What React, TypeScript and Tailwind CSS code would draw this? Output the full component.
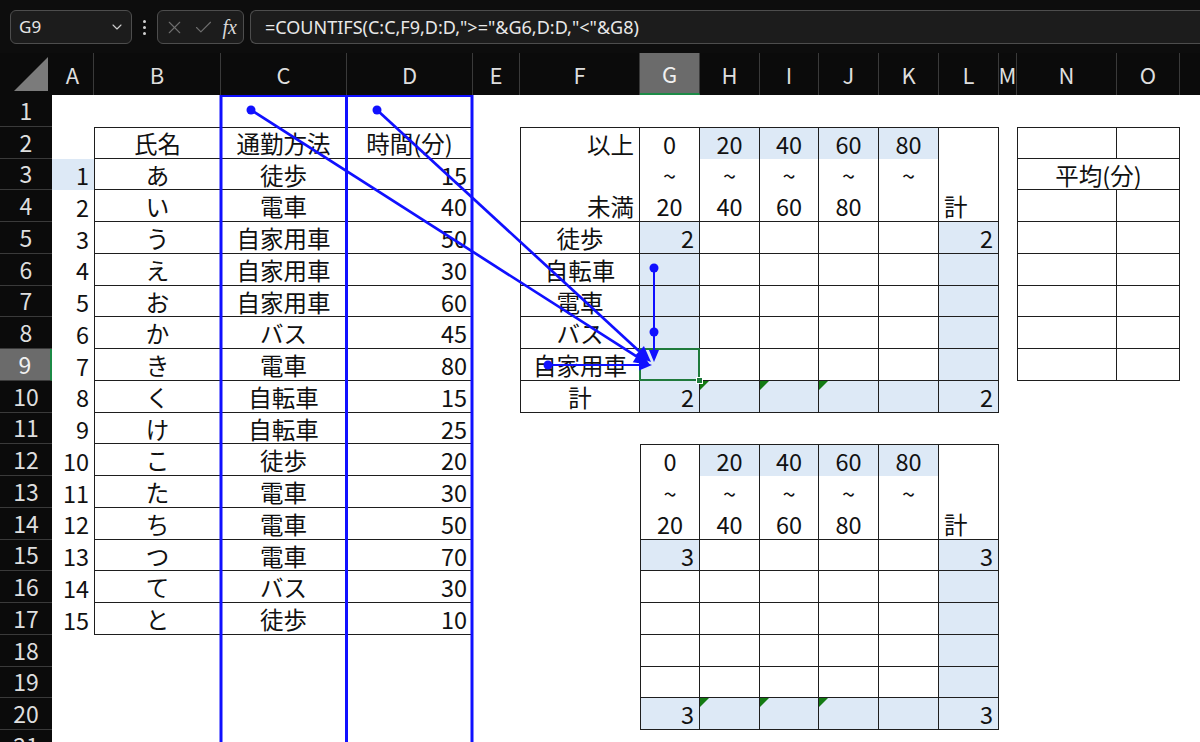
import React from "react";
import clsx from "clsx";
import { ChevronDown, X, Check } from "lucide-react";

const COLS = ["A", "B", "C", "D", "E", "F", "G", "H", "I", "J", "K", "L", "M", "N", "O", "P"];

type Align = "l" | "c" | "r";
type Cell = {
  t?: string;
  a?: Align;
  fill?: boolean;
  bt?: boolean;
  bl?: boolean;
  bb?: boolean;
  br?: boolean;
  span?: boolean;
  tri?: boolean;
  skip?: boolean;
  sel?: boolean;
};

const cells: Record<string, Cell> = {};
const set = (k: string, v: Cell) => {
  cells[k] = { ...(cells[k] || {}), ...v };
};
const range = (c1: string, c2: string) => COLS.slice(COLS.indexOf(c1), COLS.indexOf(c2) + 1);

const names = ["あ", "い", "う", "え", "お", "か", "き", "く", "け", "こ", "た", "ち", "つ", "て", "と"];
const methods = ["徒歩", "電車", "自家用車", "自家用車", "自家用車", "バス", "電車", "自転車", "自転車", "徒歩", "電車", "電車", "電車", "バス", "徒歩"];
const times = [15, 40, 50, 30, 60, 45, 80, 15, 25, 20, 30, 50, 70, 30, 10];

// left table B2:D17
for (let r = 2; r <= 17; r++)
  for (const c of ["B", "C", "D"]) set(c + r, { br: true, bb: true, bl: c === "B", bt: r === 2 });
set("B2", { t: "氏名", a: "c" });
set("C2", { t: "通勤方法", a: "c" });
set("D2", { t: "時間(分)", a: "c" });
for (let i = 0; i < 15; i++) {
  const r = i + 3;
  set("A" + r, { t: String(i + 1), a: "r" });
  set("B" + r, { t: names[i], a: "c" });
  set("C" + r, { t: methods[i], a: "c" });
  set("D" + r, { t: String(times[i]), a: "r" });
}
set("A3", { fill: true });

// middle table F2:L10
for (let r = 2; r <= 10; r++)
  for (const c of range("F", "L")) set(c + r, { br: true, bl: c === "F", bt: r === 2, bb: r >= 4 });
set("F2", { t: "以上", a: "r" });
set("F4", { t: "未満", a: "r" });
const bounds = ["0", "20", "40", "60", "80"];
const headerBlock = (top: number) => {
  range("G", "K").forEach((c, i) => {
    set(c + top, { t: bounds[i], a: "c", fill: i > 0 });
    set(c + (top + 1), { t: "~", a: "c" });
    if (i < 4) set(c + (top + 2), { t: bounds[i + 1], a: "c" });
  });
  set("L" + (top + 2), { t: "計", a: "l" });
};
headerBlock(2);
["徒歩", "自転車", "電車", "バス", "自家用車", "計"].forEach((t, i) => set("F" + (i + 5), { t, a: "c" }));
for (let r = 5; r <= 10; r++) {
  set("G" + r, { fill: true });
  set("L" + r, { fill: true });
}
range("H", "K").forEach((c) => set(c + "10", { fill: true }));
["H", "I", "J"].forEach((c) => set(c + "10", { tri: true }));
set("G5", { t: "2", a: "r" });
set("L5", { t: "2", a: "r" });
set("G10", { t: "2", a: "r" });
set("L10", { t: "2", a: "r" });
set("G9", { sel: true });

// bottom table G12:L20
for (let r = 12; r <= 20; r++)
  for (const c of range("G", "L")) set(c + r, { br: true, bl: c === "G", bt: r === 12, bb: r >= 14 });
headerBlock(12);
set("G15", { t: "3", a: "r", fill: true });
set("L15", { t: "3", a: "r", fill: true });
for (let r = 16; r <= 19; r++) set("L" + r, { fill: true });
set("G20", { t: "3", a: "r", fill: true });
range("H", "K").forEach((c) => set(c + "20", { fill: true }));
["H", "I", "J"].forEach((c) => set(c + "20", { tri: true }));
set("L20", { t: "3", a: "r", fill: true });

// right table N2:O9
for (let r = 2; r <= 9; r++)
  for (const c of ["N", "O"]) set(c + r, { br: true, bb: true, bl: c === "N", bt: r === 2 });
set("N3", { t: "平均(分)", a: "c", span: true });
set("O3", { skip: true });

type Pt = [number, number];
const head = (from: Pt, tip: Pt, len: number, w: number) => {
  const dx = tip[0] - from[0];
  const dy = tip[1] - from[1];
  const d = Math.hypot(dx, dy);
  const ux = dx / d;
  const uy = dy / d;
  const bx = tip[0] - ux * len;
  const by = tip[1] - uy * len;
  return {
    points: `${tip[0]},${tip[1]} ${bx - uy * w},${by + ux * w} ${bx + uy * w},${by - ux * w}`,
    base: [bx, by] as Pt,
  };
};

const BLUE = "#1010ff";

function Overlay() {
  const diag: { from: Pt; tip: Pt }[] = [
    { from: [251, 110], tip: [650, 365] },
    { from: [377, 110], tip: [651, 362] },
  ];
  const h1 = head([548, 365], [652, 365], 13, 5.5);
  const v1 = head([654, 268], [654, 362], 12, 5);
  return (
    <svg className="pointer-events-none absolute left-0 top-0 z-20" width={1200} height={742} viewBox="0 0 1200 742">
      <line x1={221} y1={95} x2={221} y2={742} stroke={BLUE} strokeWidth={3} />
      <line x1={346.5} y1={95} x2={346.5} y2={742} stroke={BLUE} strokeWidth={3} />
      <line x1={472} y1={95} x2={472} y2={742} stroke={BLUE} strokeWidth={3} />
      <line x1={220} y1={96} x2={473} y2={96} stroke={BLUE} strokeWidth={2} />
      {diag.map((a, i) => {
        const h = head(a.from, a.tip, 16, 7);
        return (
          <g key={i}>
            <line x1={a.from[0]} y1={a.from[1]} x2={h.base[0]} y2={h.base[1]} stroke={BLUE} strokeWidth={2.7} />
            <circle cx={a.from[0]} cy={a.from[1]} r={4.5} fill={BLUE} />
            <polygon points={h.points} fill={BLUE} />
          </g>
        );
      })}
      <line x1={548} y1={365} x2={h1.base[0]} y2={365} stroke={BLUE} strokeWidth={2} />
      <circle cx={548} cy={365} r={4.5} fill={BLUE} />
      <polygon points={h1.points} fill={BLUE} />
      <line x1={654} y1={268} x2={654} y2={v1.base[1]} stroke={BLUE} strokeWidth={2} />
      <circle cx={654} cy={268} r={4.5} fill={BLUE} />
      <circle cx={654} cy={332} r={4.5} fill={BLUE} />
      <polygon points={v1.points} fill={BLUE} />
    </svg>
  );
}

function Toolbar() {
  return (
    <div className="flex h-[53px] items-start bg-[#0d0d0d] pt-[10px]">
      <div className="ml-[10px] flex h-[34px] w-[122px] items-center justify-between rounded-[6px] border border-[#4d4d4d] bg-[#1c1c1c] pl-[8px] pr-[6px] font-['Noto_Sans',sans-serif] text-[17px] text-[#e6e6e6]">
        <span>G9</span>
        <ChevronDown size={16} strokeWidth={1.6} className="text-[#cfcfcf]" />
      </div>
      <div className="flex h-[34px] w-[25px] flex-col items-center justify-center gap-[3px]">
        <span className="block h-[3px] w-[3px] rounded-full bg-[#d0d0d0]" />
        <span className="block h-[3px] w-[3px] rounded-full bg-[#d0d0d0]" />
        <span className="block h-[3px] w-[3px] rounded-full bg-[#d0d0d0]" />
      </div>
      <div className="flex h-[34px] w-[87px] items-center justify-between rounded-[6px] border border-[#4d4d4d] bg-[#1c1c1c] px-[6px]">
        <X size={21} strokeWidth={1.3} className="text-[#6e6e6e]" />
        <Check size={21} strokeWidth={1.3} className="text-[#6e6e6e]" />
        <span className="font-['Liberation_Serif',serif] text-[20px] italic text-[#d8d8d8]">fx</span>
      </div>
      <div className="ml-[6px] flex h-[34px] flex-1 items-center rounded-l-[6px] border border-r-0 border-[#4d4d4d] bg-[#1c1c1c] pl-[14px] font-['Noto_Sans',sans-serif] text-[18px] text-[#e8e8e8]">
        {'=COUNTIFS(C:C,F9,D:D,">="&G6,D:D,"<"&G8)'}
      </div>
    </div>
  );
}

function Sheet() {
  const rows = Array.from({ length: 21 }, (_, i) => i + 1);
  return (
    <div className="grid grid-cols-[52px_42px_127px_126px_126px_47px_120px_60px_60px_59px_60px_60px_60px_18px_100px_63px_64px] grid-rows-[42px_repeat(21,31.75px)] bg-white font-['Noto_Sans_CJK_JP',sans-serif]">
      <div className="relative bg-[#0b0b0b]">
        <svg className="absolute left-0 top-0" width={52} height={42} viewBox="0 0 52 42">
          <polygon points="14,38 48,38 48,4" fill="#7b7b7b" />
        </svg>
      </div>
      {COLS.map((c) => (
        <div
          key={c}
          className={clsx(
            "flex items-center justify-center overflow-hidden border-r border-[#3a3a3a] text-[22px] leading-none",
            c === "G" ? "border-b-2 border-b-[#1c8a46] bg-[#6b6b6b] text-[#f0f0f0]" : "bg-[#0b0b0b] text-[#dedede]"
          )}
        >
          {c === "P" ? "" : c}
        </div>
      ))}
      {rows.map((r) => (
        <React.Fragment key={r}>
          <div
            className={clsx(
              "flex items-center justify-center border-b border-[#3a3a3a] text-[23px] leading-none",
              r === 9 ? "border-r-2 border-r-[#1c8a46] bg-[#6b6b6b] text-[#f0f0f0]" : "bg-[#0b0b0b] text-[#dedede]"
            )}
          >
            {r}
          </div>
          {COLS.map((c) => {
            const s = cells[c + r] || {};
            if (s.skip) return null;
            return (
              <div
                key={c}
                className={clsx(
                  "relative flex items-center whitespace-nowrap border-[#1e1e1e] px-[5px] pt-[3px] text-[23.5px] leading-none text-[#111]",
                  s.a === "c" && "justify-center",
                  s.a === "r" && "justify-end",
                  s.a === "l" && "justify-start",
                  s.fill ? "bg-[#dde9f6]" : "bg-white",
                  s.bt && "border-t",
                  s.bl && "border-l",
                  s.bb && "border-b",
                  s.br && "border-r",
                  s.span && "col-span-2",
                  c === "P" && "overflow-hidden"
                )}
              >
                {s.t}
                {s.tri && (
                  <span className="absolute left-0 top-0 h-0 w-0 border-r-[9px] border-t-[9px] border-r-transparent border-t-[#137a13]" />
                )}
                {s.sel && (
                  <>
                    <span className="pointer-events-none absolute -inset-[1px] z-10 border-2 border-[#1f7a3c]" />
                    <span className="absolute -bottom-[4px] -right-[4px] z-10 h-[7px] w-[7px] border border-white bg-[#1f7a3c]" />
                  </>
                )}
              </div>
            );
          })}
        </React.Fragment>
      ))}
    </div>
  );
}

export default function App() {
  return (
    <div className="relative h-[742px] w-[1200px] overflow-hidden bg-[#0d0d0d]">
      <Toolbar />
      <Sheet />
      <Overlay />
    </div>
  );
}
